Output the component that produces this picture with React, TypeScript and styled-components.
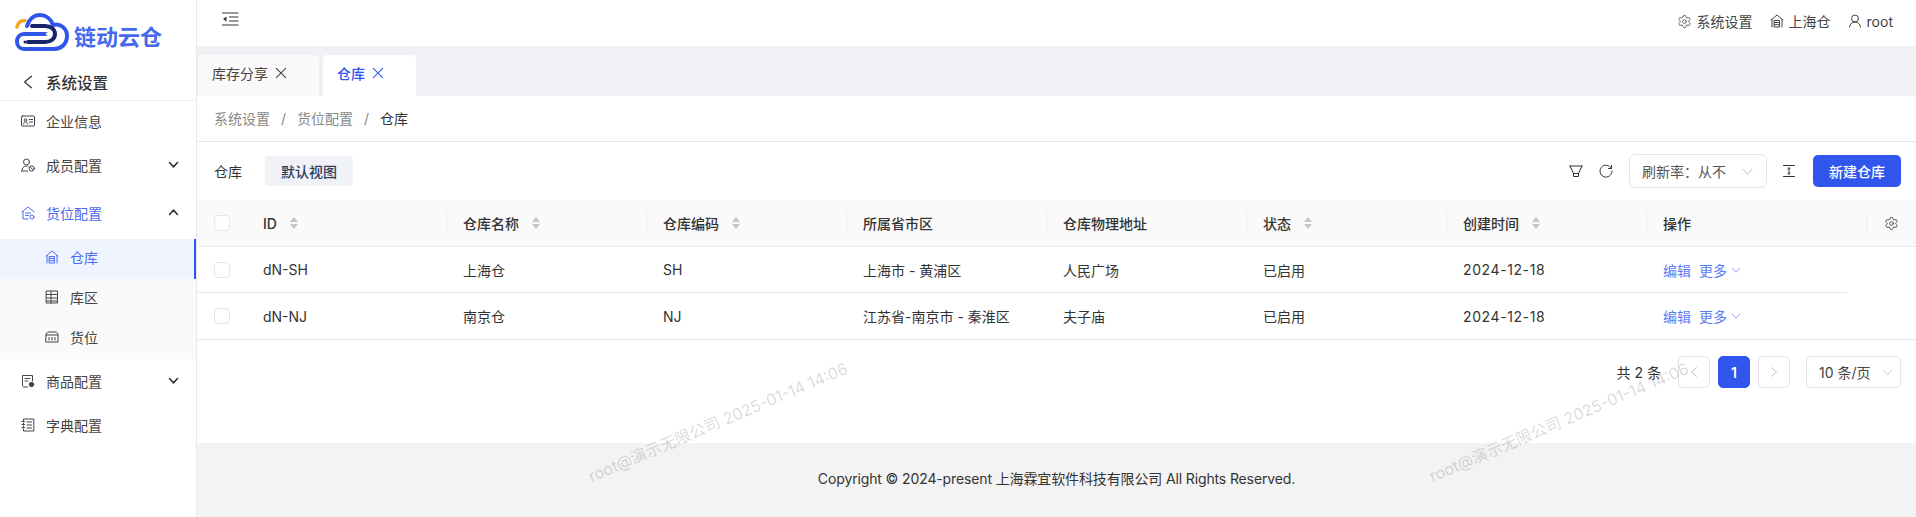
import * as React from "react";
import styled, { createGlobalStyle } from "styled-components";
import { Settings } from "lucide-react";

const GlobalStyle = createGlobalStyle`
  html, body {
    margin: 0;
    padding: 0;
    background: #fff;
  }
  body {
    font-family: Inter, "Noto Sans CJK SC", sans-serif;
    font-size: 14px;
    color: #333;
  }
  * {
    box-sizing: border-box;
  }
`;

const BLUE = "#3056ee";

const Page = styled.div`
  position: relative;
  display: flex;
  width: 1916px;
  height: 517px;
  overflow: hidden;
`;

const Sidebar = styled.aside`
  flex: 0 0 197px;
  border-right: 1px solid #e9e9e9;
  background: #fff;
`;
const LogoRow = styled.div`
  display: flex;
  align-items: flex-start;
  gap: 3px;
  height: 60px;
  padding: 13px 0 0 15px;
`;
const LogoText = styled.span`
  font-size: 22px;
  line-height: 24px;
  font-weight: 700;
  color: #4468ee;
  margin-top: 12px;
`;
const BackRow = styled.div`
  display: flex;
  align-items: center;
  gap: 10px;
  height: 41px;
  padding: 3px 0 0 20px;
  border-bottom: 1px solid #ececec;
  font-size: 15.5px;
  font-weight: 500;
  color: #333;
`;
const MenuItem = styled.div<{ $active?: boolean; $gap?: number }>`
  display: flex;
  align-items: center;
  height: 44px;
  margin-top: ${(props) => props.$gap ?? 0}px;
  padding: 0 17px 5px 21px;
  gap: 11px;
  color: ${(props) => (props.$active ? "#4a6cf0" : "#444")};
`;
const MenuLabel = styled.span`
  flex: 1;
`;
const SubMenu = styled.div`
  margin: 2px 0;
  background: #fafafa;
  width: 196px;
`;
const SubItem = styled.div<{ $active?: boolean }>`
  display: flex;
  align-items: center;
  gap: 11px;
  height: 40px;
  padding: 0 0 5px 45px;
  color: ${(props) => (props.$active ? "#4a6cf0" : "#444")};
  background: ${(props) => (props.$active ? "#eff4ff" : "transparent")};
  border-right: ${(props) => (props.$active ? `2px solid ${BLUE}` : "none")};
`;

const Main = styled.main`
  flex: 1;
  display: flex;
  flex-direction: column;
  min-width: 0;
`;
const Header = styled.header`
  flex: 0 0 46px;
  display: flex;
  align-items: center;
  justify-content: space-between;
  padding: 0 23px 8px 25px;
  background: #fff;
`;
const HeaderRight = styled.div`
  display: flex;
  align-items: center;
  gap: 17px;
  padding-top: 4px;
  color: #444;
`;
const HeaderLink = styled.span`
  display: flex;
  align-items: center;
  gap: 5px;
`;
const TabBar = styled.div`
  flex: 0 0 50px;
  display: flex;
  align-items: flex-end;
  gap: 4px;
  padding-left: 1px;
  background: #f0f1f5;
`;
const Tab = styled.div<{ $active?: boolean }>`
  display: flex;
  align-items: center;
  gap: 7px;
  height: 41px;
  padding: 0 32px 6px 14px;
  border-radius: 4px 4px 0 0;
  background: ${(props) => (props.$active ? "#fff" : "#f9f9fa")};
  color: ${(props) => (props.$active ? BLUE : "#444")};
  font-weight: ${(props) => (props.$active ? 500 : 400)};
`;
const Breadcrumb = styled.nav`
  flex: 0 0 46px;
  display: flex;
  align-items: center;
  gap: 11px;
  padding: 0 0 1px 17px;
  border-bottom: 1px solid #e8e8e8;
  color: #888;
`;
const BreadcrumbCurrent = styled.span`
  color: #333;
`;
const Toolbar = styled.div`
  flex: 0 0 58px;
  display: flex;
  align-items: center;
  padding: 0 15px 0 17px;
`;
const ToolbarTitle = styled.span`
  margin-right: 23px;
`;
const ViewTag = styled.span`
  display: flex;
  align-items: center;
  justify-content: center;
  width: 88px;
  height: 30px;
  border-radius: 4px;
  background: #f0f2f7;
  color: #2c3e60;
  font-weight: 500;
`;
const ToolbarRight = styled.div`
  margin-left: auto;
  display: flex;
  align-items: center;
`;
const RefreshSelect = styled.div`
  display: flex;
  align-items: center;
  justify-content: space-between;
  width: 138px;
  height: 34px;
  margin: 0 15px 0 16px;
  padding: 0 12px;
  border: 1px solid #e5e5e5;
  border-radius: 6px;
  color: #555;
`;
const PrimaryButton = styled.button`
  width: 88px;
  height: 32px;
  margin-left: 17px;
  padding: 0;
  border: none;
  border-radius: 5px;
  background: ${BLUE};
  color: #fff;
  font: inherit;
  font-weight: 500;
`;

const COLUMNS = "249px repeat(6, 200px) 220px 50px";
const BODY_COLUMNS = "249px repeat(6, 200px) 201px";

const HeadRow = styled.div`
  display: grid;
  grid-template-columns: ${COLUMNS};
  height: 47px;
  background: #fafafa;
  border-bottom: 1px solid #e8e8e8;
  font-weight: 500;
`;
const HeadCell = styled.div<{ $first?: boolean; $center?: boolean }>`
  position: relative;
  display: flex;
  align-items: center;
  justify-content: ${(props) => (props.$center ? "center" : "flex-start")};
  gap: 13px;
  padding-left: ${(props) => (props.$center ? 0 : 17)}px;
  ${(props) =>
    props.$first
      ? ""
      : `&::before {
    content: "";
    position: absolute;
    left: 0;
    top: 12px;
    height: 22px;
    width: 1px;
    background: #eee;
  }`}
`;
const BodyRow = styled.div<{ $full?: boolean }>`
  display: grid;
  grid-template-columns: ${BODY_COLUMNS};
  width: ${(props) => (props.$full ? "100%" : "1650px")};
  height: ${(props) => (props.$full ? 47 : 46)}px;
  border-bottom: 1px solid #e8e8e8;
`;
const BodyCell = styled.div`
  display: flex;
  align-items: center;
  padding-left: 17px;
  color: #333;
`;
const DateText = styled.span`
  letter-spacing: 0.6px;
`;
const Check = styled.span<{ $head?: boolean }>`
  flex: 0 0 16px;
  width: 16px;
  height: 16px;
  margin-right: ${(props) => (props.$head ? 20 : 33)}px;
  border: 1px solid #e5e5e5;
  border-radius: 4px;
  background: #fff;
`;
const ActionLink = styled.span`
  display: inline-flex;
  align-items: center;
  gap: 4px;
  margin-right: 8px;
  color: #5b7df5;
`;

const Pagination = styled.div`
  display: flex;
  align-items: center;
  justify-content: flex-end;
  padding: 16px 15px 0 0;
`;
const PageTotal = styled.span`
  margin-right: 17px;
`;
const PageButton = styled.span<{ $active?: boolean }>`
  display: flex;
  align-items: center;
  justify-content: center;
  width: 32px;
  height: 32px;
  margin-right: 8px;
  border: 1px solid ${(props) => (props.$active ? BLUE : "#e5e5e5")};
  border-radius: 5px;
  background: ${(props) => (props.$active ? BLUE : "#fff")};
  color: #fff;
  font-weight: 600;
`;
const PageSize = styled.span`
  display: flex;
  align-items: center;
  justify-content: space-between;
  width: 95px;
  height: 32px;
  margin-left: 8px;
  padding: 0 7px 0 12px;
  border: 1px solid #e5e5e5;
  border-radius: 5px;
  color: #444;
`;

const Spacer = styled.div`
  flex: 1;
`;
const Footer = styled.footer`
  flex: 0 0 74px;
  display: flex;
  align-items: center;
  justify-content: center;
  padding-bottom: 4px;
  background: #f3f3f3;
  color: #333;
  letter-spacing: -0.13px;
`;
const Watermark = styled.span<{ $left: number }>`
  position: absolute;
  left: ${(props) => props.$left}px;
  top: 410px;
  font-size: 16px;
  line-height: 24px;
  white-space: nowrap;
  color: rgba(0, 0, 0, 0.16);
  transform: rotate(-23deg);
  pointer-events: none;
`;
const MutedIcon = styled.span`
  display: flex;
  color: #b5b5b5;
`;
const RefreshMargin = styled.span`
  display: flex;
  margin-left: 16px;
`;
const DarkIcon = styled.span`
  display: flex;
  color: #333;
`;

const Glyph = styled.svg.attrs({ fill: "none", stroke: "currentColor" })<{ $size?: number }>`
  flex: none;
  display: block;
  width: ${(props) => props.$size ?? 14}px;
  height: ${(props) => props.$size ?? 14}px;
`;

type IconProps = { size?: number; weight?: number };

function makeIcon(children: React.ReactNode) {
  return function Icon({ size, weight = 1 }: IconProps) {
    return (
      <Glyph viewBox="0 0 14 14" $size={size} strokeWidth={weight} strokeLinecap="round" strokeLinejoin="round">
        {children}
      </Glyph>
    );
  };
}

const IdCardIcon = makeIcon(
  <>
    <rect x="0.5" y="2" width="13" height="10" rx="1" />
    <circle cx="4.5" cy="6" r="1.3" />
    <path d="M2.5 10c.3-1.4 1-2 2-2s1.700.6 2 2M8.500 5.500h3M8.500 8h3" />
  </>
);
const MemberIcon = makeIcon(
  <>
    <circle cx="5.500" cy="4" r="3" />
    <path d="M0.800 13c0-3 2-5 4.700-5 .6 0 1.100.1 1.500.3M0.800 13h6" />
    <circle cx="10.700" cy="10.500" r="2.600" />
    <path d="M9.700 9.500l2 2" />
  </>
);
const WarehouseGearIcon = makeIcon(
  <>
    <path d="M0.700 6L7 1l6.300 5M2 5.500V13h5" />
    <path d="M4.500 7h5M4.500 9.500h3" />
    <circle cx="11" cy="11" r="2" />
  </>
);
const HouseIcon = makeIcon(
  <>
    <path d="M1 6L7 1l6 5M2 5.500V13M12 5.500V13" />
    <path d="M4.500 6.500h5V13h-5zM4.500 8.500h5M4.500 10.700h5" />
  </>
);
const GridIcon = makeIcon(
  <>
    <rect x="1.500" y="1" width="11" height="12" />
    <path d="M1.500 4.500h11M1.500 8h11M1.500 11h11M6 1v12" strokeDasharray="2 0.600" />
  </>
);
const StoreIcon = makeIcon(
  <>
    <path d="M1 5.500C1 3 2 2 4 2h6c2 0 3 1 3 3.500V12H1z" />
    <path d="M1 5h12M4 7.500v2.500M7 7.500v2.500M10 7.500v2.500" />
  </>
);
const GoodsIcon = makeIcon(
  <>
    <path d="M6.500 13H3c-1 0-1.500-.5-1.500-1.500V1.500h10V7" />
    <path d="M4 4.500h5M4 7h3" />
    <circle cx="10.500" cy="10.500" r="2.200" fill="currentColor" />
  </>
);
const DictIcon = makeIcon(
  <>
    <path d="M2.500 3V1h10.300v12H2.500v-2M2.500 5v1M2.500 8v1" />
    <path d="M1 3.500h2.500M1 6.500h2.500M1 9.500h2.500M6 4h4.500M6 7h4.500M6 10h4.500" />
  </>
);
const UserIcon = makeIcon(
  <>
    <circle cx="7" cy="4.500" r="3.500" />
    <path d="M1.500 13c.4-3 2.500-5 5.500-5s5.100 2 5.500 5" />
  </>
);
const FunnelIcon = makeIcon(
  <path d="M1 2h12M1 2l3.500 7.500h5L13 2M4.500 9.500V12.500h5V9.500" />
);
const RefreshIcon = makeIcon(
  <path d="M12.300 4.300A6 6 0 1 0 13 7M12.500 1.500v3h-3" />
);
const HeightIcon = makeIcon(
  <path d="M1.500 1.500h11M1.500 12.500h11M7 4v6M5.800 4.800L7 3.700l1.200 1.100M5.800 9.200L7 10.300l1.200-1.100" />
);
const CloseIcon = makeIcon(<path d="M1.500 1.500l11 11M12.500 1.500l-11 11" />);
const DownIcon = makeIcon(<path d="M2 4.500L7 10l5-5.500" />);
const UpIcon = makeIcon(<path d="M2 9.500L7 4l5 5.500" />);
const LeftIcon = makeIcon(<path d="M10 2L4 7l6 5" />);
const RightIcon = makeIcon(<path d="M4 2l6 5-6 5" />);

const SortMark = styled.svg`
  flex: none;
  display: block;
  width: 8px;
  height: 12px;
  fill: #c6c6c6;
`;
function SortIcon() {
  return (
    <SortMark viewBox="0 0 8 12">
      <path d="M4 0l4 5H0zM4 12L0 7h8z" />
    </SortMark>
  );
}

const CollapseMark = styled.svg`
  flex: none;
  display: block;
  width: 17px;
  height: 14px;
  stroke: #333;
  fill: #333;
`;
function CollapseIcon() {
  return (
    <CollapseMark viewBox="0 0 17 14">
      <path d="M0 1h16.500M7 5h9.500M7 9h9.500M0 13h16.500" fill="none" />
      <path d="M4.500 4.500v5L1 7z" stroke="none" />
    </CollapseMark>
  );
}

const LogoMark = styled.svg`
  flex: none;
  display: block;
  width: 56px;
  height: 38px;
`;
function Logo() {
  return (
    <LogoMark viewBox="0 0 56 38" fill="none" strokeLinecap="round" strokeLinejoin="round">
      <path
        d="M12 13C14 6 19 2 25 2c6 0 11 4 13 10 7-2 14 3 14 11 0 8-6 13-13 13H9c-4 0-7-3-7-7.500S5 21 9 21h22"
        stroke="#2f55eb"
        strokeWidth="4"
      />
      <path d="M17 13h13c6 0 10 3.500 10 8s-4 8-10 8H13" stroke="#17266b" strokeWidth="4" />
      <path d="M2 14c.8-4.500 4-6.500 8-6.500" stroke="#f5a623" strokeWidth="3.500" />
      <circle cx="32" cy="21" r="1.200" fill="#fff" />
      <circle cx="10" cy="29" r="1.500" fill="#17266b" />
    </LogoMark>
  );
}

type Column = { title: string; sortable?: boolean };
const columns: Column[] = [
  { title: "ID", sortable: true },
  { title: "仓库名称", sortable: true },
  { title: "仓库编码", sortable: true },
  { title: "所属省市区" },
  { title: "仓库物理地址" },
  { title: "状态", sortable: true },
  { title: "创建时间", sortable: true },
  { title: "操作" },
];

const rows = [
  ["dN-SH", "上海仓", "SH", "上海市 - 黄浦区", "人民广场", "已启用", "2024-12-18"],
  ["dN-NJ", "南京仓", "NJ", "江苏省-南京市 - 秦淮区", "夫子庙", "已启用", "2024-12-18"],
];

export default function App() {
  return (
    <Page>
      <GlobalStyle />
      <Sidebar>
        <LogoRow>
          <Logo />
          <LogoText>链动云仓</LogoText>
        </LogoRow>
        <BackRow>
          <LeftIcon size={16} weight={1.1} />
          <span>系统设置</span>
        </BackRow>
        <MenuItem>
          <IdCardIcon />
          <MenuLabel>企业信息</MenuLabel>
        </MenuItem>
        <MenuItem>
          <MemberIcon />
          <MenuLabel>成员配置</MenuLabel>
          <DarkIcon>
            <DownIcon size={11} weight={2} />
          </DarkIcon>
        </MenuItem>
        <MenuItem $active $gap={4}>
          <WarehouseGearIcon />
          <MenuLabel>货位配置</MenuLabel>
          <DarkIcon>
            <UpIcon size={11} weight={2} />
          </DarkIcon>
        </MenuItem>
        <SubMenu>
          <SubItem $active>
            <HouseIcon />
            <span>仓库</span>
          </SubItem>
          <SubItem>
            <GridIcon />
            <span>库区</span>
          </SubItem>
          <SubItem>
            <StoreIcon />
            <span>货位</span>
          </SubItem>
        </SubMenu>
        <MenuItem>
          <GoodsIcon />
          <MenuLabel>商品配置</MenuLabel>
          <DarkIcon>
            <DownIcon size={11} weight={2} />
          </DarkIcon>
        </MenuItem>
        <MenuItem>
          <DictIcon />
          <MenuLabel>字典配置</MenuLabel>
        </MenuItem>
      </Sidebar>
      <Main>
        <Header>
          <CollapseIcon />
          <HeaderRight>
            <HeaderLink>
              <Settings size={15} strokeWidth={1.3} />
              系统设置
            </HeaderLink>
            <HeaderLink>
              <HouseIcon />
              上海仓
            </HeaderLink>
            <HeaderLink>
              <UserIcon />
              root
            </HeaderLink>
          </HeaderRight>
        </Header>
        <TabBar>
          <Tab>
            库存分享
            <CloseIcon size={12} weight={1.2} />
          </Tab>
          <Tab $active>
            仓库
            <CloseIcon size={12} weight={1.2} />
          </Tab>
        </TabBar>
        <Breadcrumb>
          <span>系统设置</span>
          <span>/</span>
          <span>货位配置</span>
          <span>/</span>
          <BreadcrumbCurrent>仓库</BreadcrumbCurrent>
        </Breadcrumb>
        <Toolbar>
          <ToolbarTitle>仓库</ToolbarTitle>
          <ViewTag>默认视图</ViewTag>
          <ToolbarRight>
            <FunnelIcon />
            <RefreshMargin>
              <RefreshIcon />
            </RefreshMargin>
            <RefreshSelect>
              刷新率：从不
              <MutedIcon>
                <DownIcon size={13} />
              </MutedIcon>
            </RefreshSelect>
            <HeightIcon />
            <PrimaryButton>新建仓库</PrimaryButton>
          </ToolbarRight>
        </Toolbar>
        <HeadRow>
          {columns.map((column, index) => (
            <HeadCell key={column.title} $first={index === 0}>
              {index === 0 && <Check $head />}
              {column.title}
              {column.sortable && <SortIcon />}
            </HeadCell>
          ))}
          <HeadCell $center>
            <Settings size={15} strokeWidth={1.3} />
          </HeadCell>
        </HeadRow>
        {rows.map((row, rowIndex) => (
          <BodyRow key={row[0]} $full={rowIndex === rows.length - 1}>
            {row.map((value, index) => (
              <BodyCell key={index}>
                {index === 0 && <Check />}
                {index === 6 ? <DateText>{value}</DateText> : value}
              </BodyCell>
            ))}
            <BodyCell>
              <ActionLink>编辑</ActionLink>
              <ActionLink>
                更多
                <DownIcon size={10} />
              </ActionLink>
            </BodyCell>
          </BodyRow>
        ))}
        <Pagination>
          <PageTotal>共 2 条</PageTotal>
          <PageButton>
            <MutedIcon>
              <LeftIcon size={12} />
            </MutedIcon>
          </PageButton>
          <PageButton $active>1</PageButton>
          <PageButton>
            <MutedIcon>
              <RightIcon size={12} />
            </MutedIcon>
          </PageButton>
          <PageSize>
            10 条/页
            <MutedIcon>
              <DownIcon size={11} />
            </MutedIcon>
          </PageSize>
        </Pagination>
        <Spacer />
        <Footer>Copyright © 2024-present 上海霖宜软件科技有限公司 All Rights Reserved.</Footer>
      </Main>
      <Watermark $left={578}>root@演示无限公司 2025-01-14 14:06</Watermark>
      <Watermark $left={1419}>root@演示无限公司 2025-01-14 14:06</Watermark>
    </Page>
  );
}
